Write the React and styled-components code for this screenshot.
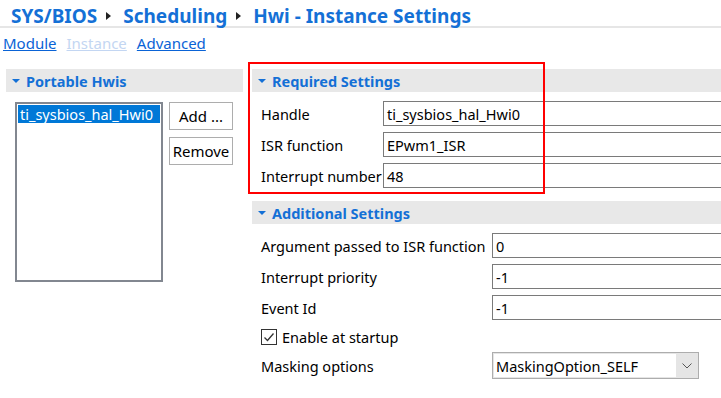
import React from 'react';
import styled, { createGlobalStyle } from 'styled-components';

const GlobalStyle = createGlobalStyle`
  html, body {
    margin: 0;
    padding: 0;
    background: #ffffff;
  }
  body {
    font-family: "Noto Sans", "Open Sans", sans-serif;
    color: #000;
    width: 721px;
    height: 398px;
    overflow: hidden;
  }
`;

const Page = styled.div`
  width: 721px;
  height: 398px;
  overflow: hidden;
`;

const TitleBar = styled.div`
  display: flex;
  align-items: flex-start;
  box-sizing: border-box;
  height: 28px;
  padding: 7px 0 0 11px;
  border-bottom: 2px solid #e6e6e6;
  font-size: 19px;
  line-height: 19px;
  font-weight: 700;
  color: #1470d6;
  white-space: nowrap;
`;

const Sep = styled.span`
  display: inline-block;
  width: 0;
  height: 0;
  margin: 5px 12px 0 9px;
  border-top: 4px solid transparent;
  border-bottom: 4px solid transparent;
  border-left: 5px solid #222;
`;

const Tabs = styled.div`
  display: flex;
  gap: 10px;
  padding: 5px 0 0 3px;
  height: 23px;
  font-size: 15px;
`;

const Tab = styled.a`
  color: ${p => (p.$disabled ? '#c3d6f2' : '#0a63d6')};
  text-decoration: underline;
  cursor: pointer;
`;

const Main = styled.div`
  display: flex;
  margin-top: 13px;
  padding-left: 6px;
`;

const LeftPanel = styled.div`
  width: 237px;
  flex-shrink: 0;
`;

const RightPanel = styled.div`
  position: relative;
  margin-left: 9px;
  width: 540px;
  flex-shrink: 0;
`;

const SectionHeader = styled.div`
  display: flex;
  align-items: center;
  height: 23px;
  background: #e8e8e8;
  padding-left: 6px;
  font-size: 14.5px;
  font-weight: 700;
  color: #1470d6;
  white-space: nowrap;
`;

const Caret = styled.span`
  display: inline-block;
  width: 0;
  height: 0;
  margin-right: 6px;
  border-left: 4px solid transparent;
  border-right: 4px solid transparent;
  border-top: 4px solid #1470d6;
`;

const ListArea = styled.div`
  display: flex;
  gap: 6px;
  padding: 10px 0 0 9px;
`;

const ListBox = styled.div`
  width: 142px;
  height: 174px;
  border: 2px solid #828790;
  background: #fff;
  padding: 1px;
`;

const ListItem = styled.div`
  height: 18px;
  line-height: 18px;
  padding-left: 2px;
  font-size: 14.5px;
  color: ${p => (p.$selected ? '#fff' : '#000')};
  background: ${p => (p.$selected ? '#0078d7' : 'transparent')};
  white-space: nowrap;
`;

const ButtonColumn = styled.div`
  display: flex;
  flex-direction: column;
  gap: 7px;
`;

const Button = styled.button`
  width: 64px;
  height: 28px;
  padding: 0;
  background: #fff;
  border: 1px solid #adadad;
  font-family: inherit;
  font-size: 15px;
  color: #000;
`;

const Rows = styled.div`
  display: flex;
  flex-direction: column;
  gap: 6px;
  padding: ${p => p.$pad || '9px 0 13px 9px'};
`;

const Row = styled.div`
  display: grid;
  grid-template-columns: ${p => p.$label}px 1fr;
  align-items: center;
  height: ${p => p.$h || 25}px;
  font-size: 14.5px;
  white-space: nowrap;
`;

const Input = styled.div`
  height: 25px;
  box-sizing: border-box;
  border: 1px solid #7a7a7a;
  padding-left: 3px;
  display: flex;
  align-items: center;
  font-size: 14.5px;
  background: #fff;
`;

const Select = styled.div`
  width: 207px;
  height: 27px;
  box-sizing: border-box;
  border: 1px solid #adadad;
  display: flex;
  align-items: stretch;
  background: #e5e5e5;
`;

const SelectValue = styled.div`
  flex: 1;
  margin: 1px 0 1px 1px;
  background: #fff;
  display: flex;
  align-items: center;
  padding-left: 2px;
  font-size: 14.5px;
`;

const SelectArrow = styled.div`
  width: 22px;
  display: flex;
  align-items: center;
  justify-content: center;
`;

const CheckRow = styled.label`
  display: flex;
  align-items: center;
  gap: 5px;
  height: 16px;
  margin: 3px 0 1px;
  font-size: 14.5px;
`;

const CheckBox = styled.span`
  width: 14px;
  height: 14px;
  border: 1px solid #333;
  display: flex;
  align-items: center;
  justify-content: center;
  background: #fff;
`;

const Highlight = styled.div`
  position: absolute;
  left: -4px;
  top: -7px;
  box-sizing: border-box;
  width: 297px;
  height: 132px;
  border: 2.5px solid #ff0000;
  pointer-events: none;
`;

export default function App() {
  return (
    <Page>
      <GlobalStyle />
      <TitleBar>
        <span>SYS/BIOS</span>
        <Sep />
        <span>Scheduling</span>
        <Sep />
        <span>Hwi - Instance Settings</span>
      </TitleBar>
      <Tabs>
        <Tab>Module</Tab>
        <Tab $disabled>Instance</Tab>
        <Tab>Advanced</Tab>
      </Tabs>
      <Main>
        <LeftPanel>
          <SectionHeader>
            <Caret />
            Portable Hwis
          </SectionHeader>
          <ListArea>
            <ListBox>
              <ListItem $selected>ti_sysbios_hal_Hwi0</ListItem>
            </ListBox>
            <ButtonColumn>
              <Button>Add ...</Button>
              <Button>Remove</Button>
            </ButtonColumn>
          </ListArea>
        </LeftPanel>
        <RightPanel>
          <SectionHeader>
            <Caret />
            Required Settings
          </SectionHeader>
          <Rows>
            <Row $label={122}>
              <span>Handle</span>
              <Input>ti_sysbios_hal_Hwi0</Input>
            </Row>
            <Row $label={122}>
              <span>ISR function</span>
              <Input>EPwm1_ISR</Input>
            </Row>
            <Row $label={122}>
              <span>Interrupt number</span>
              <Input>48</Input>
            </Row>
          </Rows>
          <SectionHeader>
            <Caret />
            Additional Settings
          </SectionHeader>
          <Rows $pad="9px 0 0 9px">
            <Row $label={231}>
              <span>Argument passed to ISR function</span>
              <Input>0</Input>
            </Row>
            <Row $label={231}>
              <span>Interrupt priority</span>
              <Input>-1</Input>
            </Row>
            <Row $label={231}>
              <span>Event Id</span>
              <Input>-1</Input>
            </Row>
            <CheckRow>
              <CheckBox>
                <svg width="12" height="12" viewBox="0 0 12 12">
                  <path d="M1.5 6.5 L4.5 9.5 L10.5 2.5" fill="none" stroke="#333" strokeWidth="1.3" />
                </svg>
              </CheckBox>
              Enable at startup
            </CheckRow>
            <Row $label={231} $h={27}>
              <span>Masking options</span>
              <Select>
                <SelectValue>MaskingOption_SELF</SelectValue>
                <SelectArrow>
                  <svg width="10" height="6" viewBox="0 0 10 6">
                    <path d="M0.5 0.5 L5 5 L9.5 0.5" fill="none" stroke="#555" strokeWidth="1" />
                  </svg>
                </SelectArrow>
              </Select>
            </Row>
          </Rows>
          <Highlight />
        </RightPanel>
      </Main>
    </Page>
  );
}
